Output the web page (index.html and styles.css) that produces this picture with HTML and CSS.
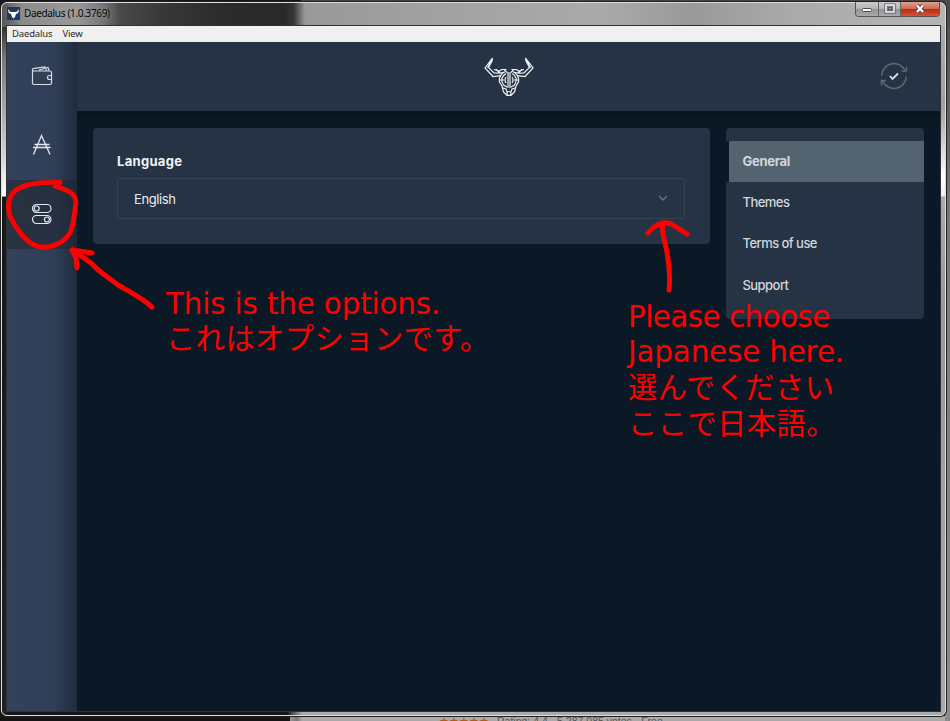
FILE: index.html
```
<!DOCTYPE html>
<html lang="en">
<head>
<meta charset="utf-8">
<title>Daedalus</title>
<link rel="stylesheet" href="styles.css">
</head>
<body>
<div class="desktop">
  <div class="window">
    <div class="titlebar">
      <svg class="app-icon" width="13" height="13" viewBox="0 0 13 13"><rect width="13" height="13" fill="#1d3a63"/><path d="M1 3 2 2.500 2.500 4.500 4.500 5h4l2-.5.5-2 1 .5-.8 3L9 7 8 10 6.500 11.500 5 10 4 7 1.800 6Z" fill="#fff"/></svg>
      <span class="title">Daedalus (1.0.3769)</span>
      <div class="controls">
        <span class="control minimize"><svg width="12" height="12" viewBox="0 0 12 12"><rect x="1.500" y="5.500" width="9" height="3" rx="1" fill="#fff" stroke="#4a4a58"/></svg></span>
        <span class="control maximize"><svg width="12" height="12" viewBox="0 0 12 12"><rect x="2" y="2" width="8" height="7" fill="none" stroke="#4d4d5c" stroke-width="3"/><rect x="2" y="2" width="8" height="7" fill="none" stroke="#fff" stroke-width="1.500"/><rect x="4.500" y="4.500" width="3" height="2" fill="#aaa" stroke="#555"/></svg></span>
        <span class="control close"><svg width="12" height="12" viewBox="0 0 12 12"><path d="m3 2.500 6 6.500M9 2.500 3 9" stroke="#5b4251" stroke-width="4.200"/><path d="m3 2.500 6 6.500M9 2.500 3 9" stroke="#fff" stroke-width="2.300"/></svg></span>
      </div>
    </div>
    <div class="client">
      <div class="menubar"><span>Daedalus</span><span>View</span></div>
      <div class="app">
        <aside class="sidebar">
          <div class="side-item"><svg width="22" height="22" viewBox="0 0 22 22" fill="none" stroke="#d5dce6" stroke-width="1.200"><path d="M1.500 5v13q0 1.500 1.500 1.500h16q1.500 0 1.500-1.500v-3.500M20.500 10.500V7.500q0-1.500-1.500-1.500H3Q1.500 6 1.500 4.700T3 3.300L14 2l1.500 3.500M8 5l9-2.500 1 3M18.500 10.500h2v4h-2a2 2 0 0 1 0-4Z"/></svg></div>
          <div class="side-item"><svg width="22" height="22" viewBox="0 0 22 22" fill="none" stroke="#e3e8ef" stroke-width="1.300"><path d="M2.500 20.500 10.500 1.500 19 20.500M3.500 10.500h15M2 13.500h17.500"/></svg></div>
          <div class="side-item active"><svg width="22" height="22" viewBox="0 0 22 22" fill="none" stroke="#e3e8ef" stroke-width="1.200"><rect x="1.500" y="1.500" width="18.500" height="8" rx="4"/><circle cx="5.700" cy="5.500" r="2.500"/><rect x="1.500" y="12.500" width="18.500" height="8" rx="4"/><circle cx="15.900" cy="16.500" r="2.500"/></svg></div>
        </aside>
        <div class="main">
          <header class="topbar">
            <svg class="logo" width="50" height="40" viewBox="0 0 50 40" fill="none" stroke="#eef2f6" stroke-width="1.200">
              <path d="M8.500 1 1 11l8 8.500 8-.8M8.500 1 8 4 4.500 10.500l5.500 5.500 5 .2M8.500 1l-5 10M10 12.500l5.500 1.500 2-1.500h5M12 12.500l4 3.500 5-1M20 12.500l3 3"/>
              <path d="M41.500 1 49 11l-8 8.500-8-.8M41.500 1l.5 3 3.500 6.500-5.500 5.500-5 .2M41.500 1l5 10M40 12.500l-5.500 1.500-2-1.500h-5M38 12.500 34 16l-5-1M30 12.500l-3 3"/>
              <path d="M19.500 15.500Q14.500 19 15.500 25l2.500 4 1.500 6 3.500 3.500h4l3.500-3.500 1.500-6 2.500-4q1-6-4-9.500M24 15v16M26 15v16M22 16.500q-7 4.500-2.500 11.500l3.500 2M28 16.500q7 4.500 2.500 11.500l-3.500 2M22 20q-2 3 0 6M28 20q2 3 0 6M16 23h4M30 23h4M19 31l3 1 1 3M31 31l-3 1-1 3"/>
              <circle cx="25" cy="36.500" r="2"/>
            </svg>
            <svg class="sync" width="28" height="28" viewBox="0 0 28 28" fill="none" stroke="#5b6877" stroke-width="1.600"><path d="M1.700 13.500A12.300 12.300 0 0 1 25.500 9.500M26.300 14.500A12.300 12.300 0 0 1 2.500 18.500M21.500 9h5V4.500M6 18.500H1.500v5"/><path d="m10 14 2.500 3 5.500-5.500" stroke="#dce3e9" stroke-width="1.800"/></svg>
          </header>
          <div class="content">
            <section class="card">
              <div class="label">Language</div>
              <div class="select"><span>English</span><svg width="10" height="7" viewBox="0 0 10 7"><path d="m1 1 4 4 4-4" fill="none" stroke="#657587" stroke-width="1.300"/></svg></div>
            </section>
            <nav class="nav">
              <div class="nav-pad"></div>
              <div class="nav-item selected">General</div>
              <div class="nav-item">Themes</div>
              <div class="nav-item">Terms of use</div>
              <div class="nav-item last">Support</div>
            </nav>
          </div>
        </div>
      </div>
    </div>
  </div>
  <div class="page-behind"><span class="stars">★★★★★</span><span>Rating: 4.4 - 5,287,085 votes - Free</span></div>
  <svg class="strokes" width="950" height="721" viewBox="0 0 950 721" fill="none" stroke="#f00" stroke-linecap="round" stroke-linejoin="round">
    <path d="M60 182.500C45 182 24 183 15 191 8 197 7 207 10 216 15 227 24 240 34 245 47 251 63 244 70 233 74 225 74 215 76 202 75 192 66 190 55 186" stroke-width="4.800"/>
    <path d="M152 307C144 299 130 292 118 285 105 275 99 272 91 263L73 250M77 268 76 258 72 250 92 253" stroke-width="5"/>
    <path d="M669 290C671 273 668 256 665 243 662 234 663 228 662 223M648 233C655 224 665 220 673 225L687 234" stroke-width="5"/>
  </svg>
  <div class="note note-options"><span class="en">This is the options.</span><span class="ja">これはオプションです。</span></div>
  <div class="note note-language"><span class="en en-tight">Please choose</span><span class="en">Japanese here.</span><span class="ja">選んでください</span><span class="ja">ここで日本語。</span></div>
</div>
</body>
</html>
```
FILE: styles.css
```
* { box-sizing: border-box; }
body { margin: 0; background: #111; font-family: Inter, "Liberation Sans", sans-serif; }
.desktop {
  position: relative; width: 950px; height: 721px; overflow: hidden; padding: 2px 3px 4px 1px;
  background:
    linear-gradient(#4a4a4a, #777 30%, #8b8b8b) right top / 5px 100% no-repeat,
    linear-gradient(90deg, #151515 290px, #999 290px, #777 297px, #aaa 302px) 0 716px / 950px 5px no-repeat,
    linear-gradient(90deg, #17141c, #151515 300px, #444 302px) 0 0 / 950px 3px no-repeat,
    #181818;
}
.window {
  width: 945px; height: 714px; border: 1px solid #ddd; border-radius: 6px; padding: 0 5px 4px 4px;
  display: flex; flex-direction: column; box-shadow: 0 0 0 1px #222;
  background:
    linear-gradient(#333 0, #777 30px, #ccc 120px, #fff 169px, #171717 170px, #222 100%) 0 24px / 5px 100% no-repeat,
    linear-gradient(#aaa 0, #a0a0a0 80px, #fff 150px, #eee 169px, #aaa 170px, #999 280px, #aaa 100%) right 24px / 6px 100% no-repeat,
    linear-gradient(90deg, #161616 285px, #aaa 300px) 0 100% / 100% 6px no-repeat,
    linear-gradient(90deg, #555 0, #8b8b8b 20px, #999 75px, #777 100px, #4a4a4a 118px, #383838 160px, #2b2b2b 220px, #292929 282px, #383838 292px, #999 303px, #a2a2a2 450px, #aaa 600px, #999 690px, #aaa 790px, #b5b5b5) 0 0 / 100% 24px no-repeat,
    #777;
}
.titlebar { height: 22px; flex: none; display: flex; align-items: flex-start; }
.app-icon { margin: 4px 4px 0 1px; }
.title { font: 10px/20px "Noto Sans", sans-serif; letter-spacing: -.34px; color: #050505; text-shadow: 0 0 5px #aaa; white-space: nowrap; }
.controls { margin: -1px 0 0 auto; display: flex; height: 15px; border: 1px solid #555; border-top: 0; border-radius: 0 0 4px 4px; overflow: hidden; }
.control { width: 22px; display: flex; justify-content: center; align-items: center; border-right: 1px solid #666; background: linear-gradient(#ccc, #b5b5b5 48%, #929292 50%, #aaa); }
.minimize { width: 23px; }
.close { width: 38px; border-right: 0; background: linear-gradient(#dda08f, #ce6b52 48%, #b9290d 50%, #d95236); }
.client { width: 935px; height: 687px; flex: none; border: 1px solid #2f3237; display: flex; flex-direction: column; }
.menubar { height: 16px; flex: none; background: #f0f0f0; display: flex; gap: 10px; padding-left: 5px; font: 9.500px/15px "Noto Sans", sans-serif; letter-spacing: -.16px; color: #292929; }
.app { flex: 1; display: flex; background: #0b1926; }
.sidebar { width: 70px; background: linear-gradient(90deg, #33425b, #303f57 47px, #2a384d 56px, #202c3c); }
.side-item { height: 69px; display: flex; justify-content: center; align-items: center; padding-bottom: 2px; }
.active { background: linear-gradient(90deg, #283241, #263040 50px, #1e2835); }
.main { flex: 1; display: flex; flex-direction: column; }
.topbar { height: 69px; background: #263345; display: grid; grid-template-columns: 1fr 50px 1fr; align-items: center; box-shadow: 0 2px 8px #04101a; clip-path: inset(0 0 -12px 0); }
.logo { grid-column: 2; }
.sync { justify-self: end; margin: 0 32px 2px 0; }
.content { display: flex; align-items: flex-start; gap: 16px; padding: 17px 16px; }
.card { width: 617px; height: 116px; padding: 24px 24px; background: #263345; border-radius: 4px; }
.label { font-size: 13px; line-height: 18px; font-weight: 700; color: #f0f4f8; height: 26px; letter-spacing: .3px; }
.select { height: 41px; width: 568px; border: 1px solid #344354; border-radius: 2px; padding: 0 16px; display: flex; align-items: center; justify-content: space-between; font-size: 13px; color: #e8eef3; letter-spacing: -.4px; }
.nav { width: 198px; border-radius: 4px; overflow: hidden; color: #d3d7dc; font-size: 13px; font-weight: 500; letter-spacing: -.55px; }
.nav-pad { height: 13px; background: #263345; }
.nav-item { height: 41px; line-height: 40px; padding-left: 16.500px; background: #263345; }
.selected { background: #53636f; margin-left: 3px; padding-left: 13.500px; font-weight: 700; letter-spacing: -.3px; }
.last { height: 55px; line-height: 42px; }
.page-behind { position: absolute; left: 439px; top: 716px; height: 5px; overflow: hidden; display: flex; gap: 8px; font: 10.500px/10px "Liberation Sans", sans-serif; color: #555; white-space: nowrap; }
.stars { color: #b65c17; }
.strokes { position: absolute; left: 0; top: 0; }
.note { position: absolute; display: flex; flex-direction: column; color: #f00; font: 400 29.300px/35.700px "DejaVu Sans", "Noto Sans CJK JP", sans-serif; white-space: nowrap; }
.note-options { left: 166px; top: 286.500px; }
.note-language { left: 628px; top: 299.500px; }
.en { letter-spacing: -.12px; }
.en-tight { letter-spacing: -.5px; }
.ja { letter-spacing: .4px; }
```
